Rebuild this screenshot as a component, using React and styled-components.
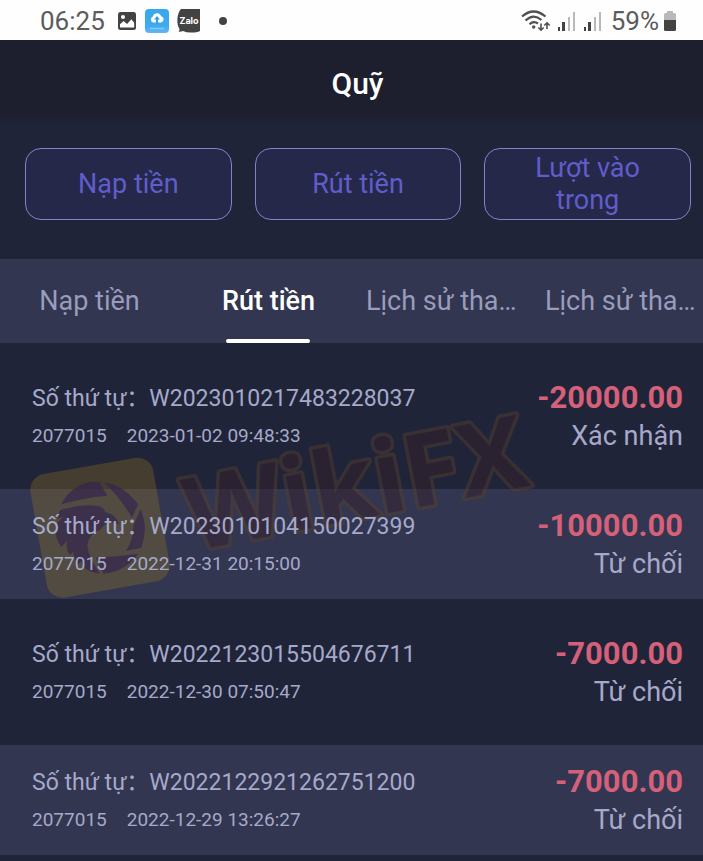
import React, { useState } from "react";
import styled, { createGlobalStyle } from "styled-components";

const tabs = [
  { id: "deposit", label: "Nạp tiền" },
  { id: "withdraw", label: "Rút tiền" },
  { id: "history", label: "Lịch sử tha…", long: true },
  { id: "changes", label: "Lịch sử tha…", long: true },
];

const orders = [
  {
    code: "W2023010217483228037",
    user: "2077015",
    time: "2023-01-02 09:48:33",
    amount: "-20000.00",
    status: "Xác nhận",
  },
  {
    code: "W2023010104150027399",
    user: "2077015",
    time: "2022-12-31 20:15:00",
    amount: "-10000.00",
    status: "Từ chối",
  },
  {
    code: "W2022123015504676711",
    user: "2077015",
    time: "2022-12-30 07:50:47",
    amount: "-7000.00",
    status: "Từ chối",
  },
  {
    code: "W2022122921262751200",
    user: "2077015",
    time: "2022-12-29 13:26:27",
    amount: "-7000.00",
    status: "Từ chối",
  },
];

function PictureIcon() {
  return (
    <svg width="20" height="20" viewBox="0 0 20 20">
      <rect x="1" y="1" width="18" height="18" rx="2.5" fill="#434343" />
      <circle cx="6" cy="6" r="2" fill="#fff" />
      <path d="M3 16.500v-3.200l3.600-3.400 3.500 3 4.200-4.600 2.900 3.400v4.800z" fill="#fff" />
    </svg>
  );
}

function CloudIcon() {
  return (
    <svg width="24" height="24" viewBox="0 0 24 24">
      <defs>
        <linearGradient id="cloudBg" x1="0" y1="0" x2="0" y2="1">
          <stop offset="0" stopColor="#35a9ea" />
          <stop offset="0.7" stopColor="#3faaf0" />
          <stop offset="1" stopColor="#63b8f4" />
        </linearGradient>
      </defs>
      <rect width="24" height="24" rx="4" fill="url(#cloudBg)" />
      <path
        d="M8.500 13.500a3.200 3.200 0 0 1-.6-6.100 4.300 4.300 0 0 1 8.200-.2 3.200 3.200 0 0 1-.5 6.300z"
        fill="#fff"
      />
      <path d="M12 7l3 3.600h-2V15h-2v-4.400H9z" fill="#329fe3" />
      <path d="M5 19.500h14" stroke="#86c8f6" strokeWidth="1.500" />
    </svg>
  );
}

function ZaloIcon() {
  return (
    <svg width="24" height="24" viewBox="0 0 24 24">
      <path
        d="M4 0h19v22q-3 1.600-9 1.600-5 0-8-1.600-2 1-4.500.8 1.200-1 1-2.800Q0 16 .4 10 1 3 4 0z"
        fill="#434343"
      />
      <text
        x="12"
        y="15"
        textAnchor="middle"
        fontFamily="Inter, sans-serif"
        fontSize="9"
        fontWeight="700"
        fill="#fff"
      >
        Zalo
      </text>
    </svg>
  );
}

function WifiIcon() {
  return (
    <svg width="30" height="24" viewBox="0 0 30 24" fill="none">
      <g stroke="#505050" strokeWidth="2.200">
        <path d="M1 7.500Q12.500-2.500 24.500 7.500" />
        <path d="M4.500 11.500Q12.500 4 20.500 11" />
        <path d="M8.500 15.200Q12.500 11.500 17 14.500" />
      </g>
      <circle cx="12.700" cy="18" r="1.700" fill="#505050" />
      <g stroke="#505050" strokeWidth="1.600">
        <path d="M20 14.500v6.500M17.300 18.500l2.700 2.700 2.700-2.700" />
        <path d="M26 20v-6M23.300 16.500l2.700-2.700 2.700 2.700" />
      </g>
    </svg>
  );
}

function SignalIcon() {
  return (
    <svg width="20" height="22" viewBox="0 0 20 22">
      <path d="M1 17h2v4H1zM5 12h3v9H5z" fill="#434343" />
      <path d="M11 7h2v14h-2zM16 2h2v19h-2z" fill="#b9b9b9" />
    </svg>
  );
}

function BatteryIcon() {
  return (
    <svg width="14" height="22" viewBox="0 0 14 22">
      <path d="M4 1h6v2h1.500Q13 3 13 4.500V11H1V4.500Q1 3 2.500 3H4z" fill="#b9b9b9" />
      <path d="M1 10h12v9.500q0 1.500-1.500 1.500h-9Q1 21 1 19.500z" fill="#434343" />
    </svg>
  );
}

function Watermark() {
  return (
    <WatermarkSvg width="600" height="320" viewBox="0 0 600 320">
      <g transform="translate(20 102) scale(0.3333)">
        <rect
          x="53"
          y="60"
          width="374"
          height="376"
          rx="48"
          fill="#a5801c"
          opacity="0.28"
          transform="rotate(-10 240 248)"
        />
        <g fill="#33224f" opacity="0.65">
          <path d="M124 178Q150 126 205 112 225 108 238 112L262 152Q190 158 124 178z" />
          <path d="M252 112Q310 120 354 178L336 218Q302 160 252 112z" />
          <path d="M362 192Q386 250 364 308L318 318Q340 284 340 242z" />
          <path d="M354 326Q316 380 250 386L228 338Q290 336 354 326z" />
          <path d="M120 196Q190 174 238 184 252 190 256 202 286 206 298 238 270 224 254 240 240 256 226 262 204 276 202 302 206 338 240 386 206 384 190 364L184 348 176 358Q160 344 160 320L150 330Q136 316 142 286L124 306Q100 272 108 238L132 214 112 222z" />
        </g>
      </g>
      <g transform="translate(193 208) rotate(-11)">
        <WatermarkText x="0" y="0">
          WikiFX
        </WatermarkText>
      </g>
    </WatermarkSvg>
  );
}

function App() {
  const [active, setActive] = useState("withdraw");
  return (
    <Page>
      <GlobalStyle />
      <StatusBar>
        <StatusGroup>
          <StatusText>06:25</StatusText>
          <AppIcons>
            <PictureIcon />
            <CloudIcon />
            <ZaloIcon />
          </AppIcons>
          <Dot />
        </StatusGroup>
        <StatusGroup>
          <SignalIcons>
            <WifiIcon />
            <SignalIcon />
            <SignalIcon />
          </SignalIcons>
          <StatusText>59%</StatusText>
          <BatteryWrap>
            <BatteryIcon />
          </BatteryWrap>
        </StatusGroup>
      </StatusBar>
      <Header>
        <Title>Quỹ</Title>
      </Header>
      <Actions>
        <ActionButton>Nạp tiền</ActionButton>
        <ActionButton>Rút tiền</ActionButton>
        <ActionButton>Lượt vào trong</ActionButton>
      </Actions>
      <TabBar role="tablist">
        {tabs.map((tab) => (
          <Tab
            key={tab.id}
            role="tab"
            aria-selected={active === tab.id}
            $long={tab.long}
            onClick={() => setActive(tab.id)}
          >
            {tab.label}
          </Tab>
        ))}
      </TabBar>
      <ListWrap>
        <List>
          {orders.map((order) => (
            <Row key={order.code}>
              <RowInfo>
                <OrderLine>
                  <span>Số thứ tự：</span>
                  <span>{order.code}</span>
                </OrderLine>
                <DetailLine>
                  <span>{order.user}</span>
                  <span>{order.time}</span>
                </DetailLine>
              </RowInfo>
              <RowResult>
                <Amount>{order.amount}</Amount>
                <Status>{order.status}</Status>
              </RowResult>
            </Row>
          ))}
        </List>
        <Watermark />
      </ListWrap>
    </Page>
  );
}

export default App;

const GlobalStyle = createGlobalStyle`
  * {
    box-sizing: border-box;
  }
  body {
    margin: 0;
    background: #202438;
    font-family: Roboto, "Noto Sans CJK SC", sans-serif;
  }
  button {
    font-family: inherit;
    cursor: pointer;
  }
  svg {
    display: block;
    flex: none;
  }
`;

const Page = styled.div`
  background: #202438;
`;

const StatusBar = styled.div`
  display: flex;
  align-items: center;
  justify-content: space-between;
  height: 40px;
  padding: 2px 26px 0 40px;
  background: #fefefe;
`;

const StatusGroup = styled.div`
  display: flex;
  align-items: center;
`;

const StatusText = styled.span`
  font-size: 26px;
  line-height: 38px;
  color: #5c5c5c;
`;

const AppIcons = styled.div`
  display: flex;
  align-items: center;
  gap: 8px;
  margin-left: 12px;
`;

const Dot = styled.i`
  width: 8px;
  height: 8px;
  margin-left: 18px;
  border-radius: 50%;
  background: #434343;
`;

const SignalIcons = styled.div`
  display: flex;
  align-items: center;
  gap: 6px;
  margin-right: 8px;
`;

const BatteryWrap = styled.div`
  margin-left: 4px;
`;

const Header = styled.header`
  display: flex;
  align-items: center;
  justify-content: center;
  height: 88px;
  padding-left: 12px;
  background: linear-gradient(#1d1e2e 80%, #202438);
`;

const Title = styled.h1`
  margin: 0;
  font-size: 30px;
  font-weight: 500;
  line-height: 40px;
  color: #ffffff;
`;

const Actions = styled.div`
  display: grid;
  grid-template-columns: repeat(3, 1fr);
  gap: 23px;
  padding: 20px 12px 39px 25px;
`;

const ActionButton = styled.button`
  height: 72px;
  padding: 0 40px;
  border: 1px solid #8482c4;
  border-radius: 16px;
  background: #262849;
  font-size: 27px;
  line-height: 32px;
  color: #5f5dcb;
`;

const TabBar = styled.div`
  display: flex;
  height: 84px;
  overflow: hidden;
  background: #323650;
`;

const Tab = styled.button`
  position: relative;
  flex: 0 0 179px;
  padding: 0 8px;
  border: none;
  background: none;
  font-size: 27px;
  line-height: 40px;
  text-align: ${({ $long }) => ($long ? "left" : "center")};
  white-space: nowrap;
  color: #9a9cbc;

  &[aria-selected="true"] {
    font-weight: 500;
    color: #ffffff;
  }
  &[aria-selected="true"]::after {
    content: "";
    position: absolute;
    bottom: 0;
    left: 47px;
    right: 48px;
    height: 4px;
    border-radius: 2px;
    background: #ffffff;
  }
`;

const ListWrap = styled.div`
  position: relative;
`;

const List = styled.ul`
  display: grid;
  gap: 18px;
  margin: 0;
  padding: 18px 0 6px;
  list-style: none;
`;

const Row = styled.li`
  display: flex;
  justify-content: space-between;
  padding: 16px 20px 18px 32px;

  &:nth-child(even) {
    background: #323650;
  }
`;

/* keeps the order text readable above the watermark */
const RowInfo = styled.div`
  position: relative;
  z-index: 1;
  display: grid;
  align-content: start;
  color: #a6a9ca;
`;

const OrderLine = styled.div`
  display: flex;
  font-size: 23px;
  line-height: 44px;
`;

const DetailLine = styled.div`
  display: flex;
  gap: 20px;
  font-size: 19px;
  line-height: 30px;
`;

const RowResult = styled.div`
  text-align: right;
`;

const Amount = styled.div`
  font-size: 31px;
  font-weight: 700;
  line-height: 42px;
  color: #d5607a;
`;

const Status = styled.div`
  font-size: 27px;
  line-height: 34px;
  color: #a6a9ca;
`;

const WatermarkSvg = styled.svg`
  position: absolute;
  top: 0;
  left: 0;
  overflow: visible;
  pointer-events: none;
`;

const WatermarkText = styled.text`
  font-family: "Open Sans", sans-serif;
  font-size: 101px;
  font-weight: 700;
  fill: #37202a;
  stroke: #58402e;
  stroke-width: 7px;
  stroke-linejoin: round;
  paint-order: stroke;
  opacity: 0.45;
`;
